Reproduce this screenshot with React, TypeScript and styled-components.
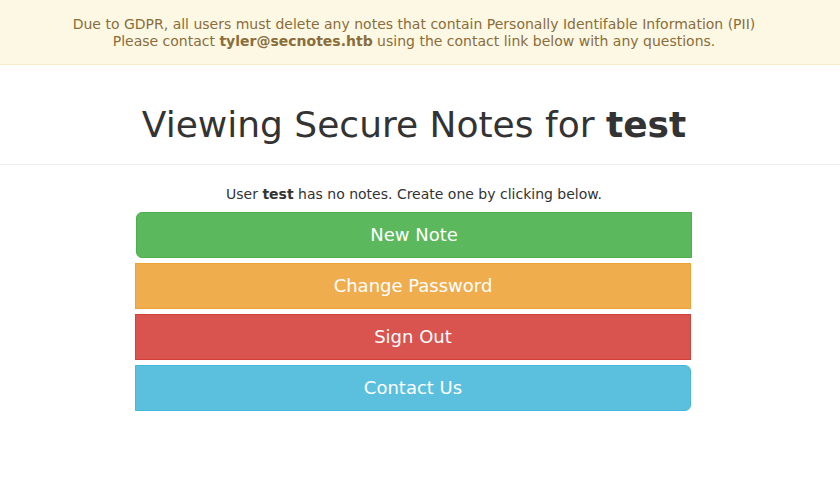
import styled, { createGlobalStyle } from "styled-components";

type Variant = "success" | "warning" | "danger" | "info";

type ButtonProps = {
  $variant: Variant;
  $radius: string;
  $shift?: number;
};

const palette: Record<Variant, { bg: string; border: string }> = {
  success: { bg: "#5cb85c", border: "#4cae4c" },
  warning: { bg: "#f0ad4e", border: "#eea236" },
  danger: { bg: "#d9534f", border: "#d43f3a" },
  info: { bg: "#5bc0de", border: "#46b8da" },
};

const GlobalStyle = createGlobalStyle`
html, body {
  margin: 0;
  padding: 0;
  background: #fff;
}
body {
  font-family: "DejaVu Sans", "Liberation Sans", sans-serif;
  font-size: 14px;
  line-height: 1.42857;
  color: #333;
}
`;

const Page = styled.div`
width: 840px;
`;

const Banner = styled.div`
background: #fcf8e3;
border-bottom: 1px solid #faebcc;
color: #8a6d3b;
padding: 16px 12px 14px 0;
text-align: center;
line-height: 17px;
`;

const Header = styled.div`
border-bottom: 1px solid #eee;
padding: 40px 12px 19px 0;
text-align: center;
`;

const Title = styled.h1`
margin: 0;
font-size: 36px;
font-weight: 400;
line-height: 40px;
color: #333;
`;

const Body = styled.div`
padding-right: 14px;
display: flex;
flex-direction: column;
align-items: center;
`;

const Notice = styled.p`
margin: 20px 0 7px;
padding-left: 2px;
text-align: center;
`;

const Actions = styled.div`
width: 556px;
display: flex;
flex-direction: column;
gap: 5px;
`;

const Button = styled.button<ButtonProps>`
box-sizing: border-box;
width: 100%;
height: 46px;
padding: 10px 16px;
font-family: inherit;
font-size: 18px;
line-height: 24px;
color: #fff;
background: ${(p) => palette[p.$variant].bg};
border: 1px solid ${(p) => palette[p.$variant].border};
border-radius: ${(p) => p.$radius};
margin-left: ${(p) => p.$shift ?? 0}px;
text-align: center;
cursor: pointer;
`;

export default function App() {
  return (
    <Page>
      <GlobalStyle />
      <Banner>
        Due to GDPR, all users must delete any notes that contain Personally Identifable Information (PII)
        <br />
        Please contact <b>tyler@secnotes.htb</b> using the contact link below with any questions.
      </Banner>
      <Header>
        <Title>
          Viewing Secure Notes for <b>test</b>
        </Title>
      </Header>
      <Body>
        <Notice>
          User <b>test</b> has no notes. Create one by clicking below.
        </Notice>
        <Actions>
          <Button $variant="success" $radius="6px 0 0 6px" $shift={1}>New Note</Button>
          <Button $variant="warning" $radius="0">Change Password</Button>
          <Button $variant="danger" $radius="0">Sign Out</Button>
          <Button $variant="info" $radius="0 6px 6px 0">Contact Us</Button>
        </Actions>
      </Body>
    </Page>
  );
}
